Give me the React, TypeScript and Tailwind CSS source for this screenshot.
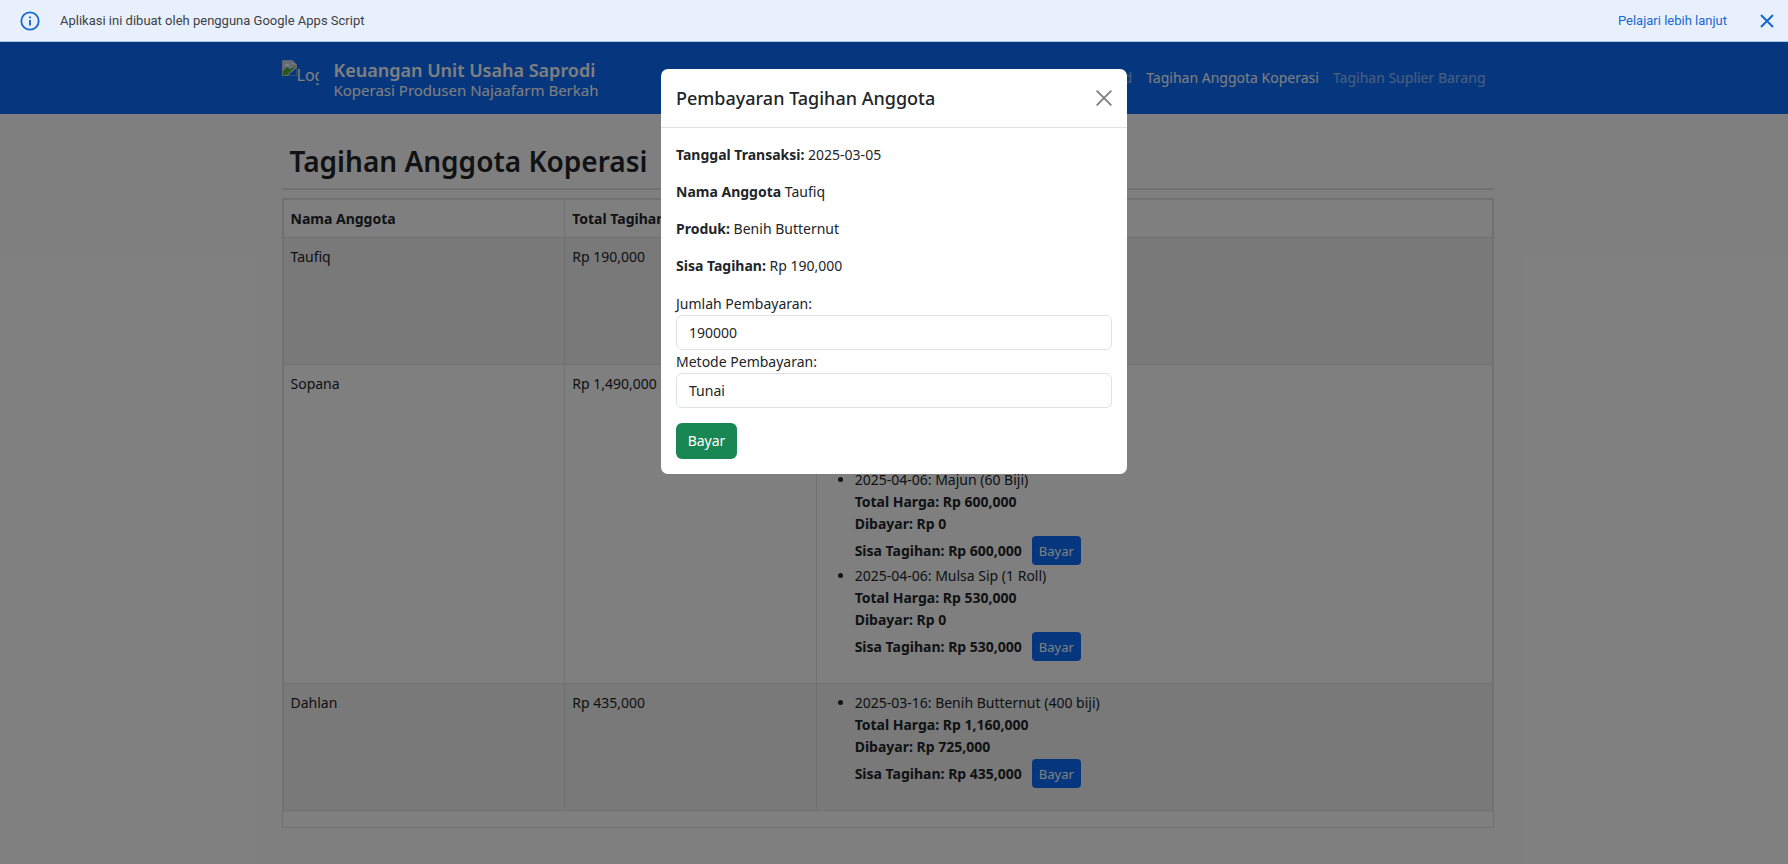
import React from 'react';

type Item = { text: string; total: string; paid: string; due: string };
type Member = { name: string; total: string; items: Item[] };

const members: Member[] = [
  {
    name: 'Taufiq',
    total: 'Rp 190,000',
    items: [{ text: '2025-03-05: Benih Butternut', total: 'Rp 190,000', paid: 'Rp 0', due: 'Rp 190,000' }],
  },
  {
    name: 'Sopana',
    total: 'Rp 1,490,000',
    items: [
      { text: '2025-03-16: Benih Butternut', total: 'Rp 360,000', paid: 'Rp 0', due: 'Rp 360,000' },
      { text: '2025-04-06: Majun (60 Biji)', total: 'Rp 600,000', paid: 'Rp 0', due: 'Rp 600,000' },
      { text: '2025-04-06: Mulsa Sip (1 Roll)', total: 'Rp 530,000', paid: 'Rp 0', due: 'Rp 530,000' },
    ],
  },
  {
    name: 'Dahlan',
    total: 'Rp 435,000',
    items: [
      { text: '2025-03-16: Benih Butternut (400 biji)', total: 'Rp 1,160,000', paid: 'Rp 725,000', due: 'Rp 435,000' },
    ],
  },
];

function Banner() {
  return (
    <div className="flex h-[42px] items-center border-b border-[#a8c7e8] bg-[#e8f0fe] pr-[13px] pl-5 font-[Roboto,sans-serif] text-[13px] text-[#3c4043]">
      <svg width="20" height="20" viewBox="0 0 20 20" fill="none" className="mr-5 shrink-0" aria-hidden="true">
        <circle cx="10" cy="10" r="8.7" stroke="#1967d2" strokeWidth="1.8" />
        <path d="M10 9v5.4M10 5.4v1.9" stroke="#1967d2" strokeWidth="1.9" />
      </svg>
      <span className="flex-1">Aplikasi ini dibuat oleh pengguna Google Apps Script</span>
      <a href="#" className="mr-8 text-[#1967d2]">Pelajari lebih lanjut</a>
      <button type="button" aria-label="Tutup" className="flex h-5 w-4 items-center justify-center">
        <svg width="14" height="14" viewBox="0 0 14 14" stroke="#1967d2" strokeWidth="2" aria-hidden="true">
          <path d="M1 1l12 12M13 1L1 13" />
        </svg>
      </button>
    </div>
  );
}

function Navbar() {
  return (
    <header className="bg-[#0d6efd] pr-[13px] text-white">
      <div className="mx-auto flex h-[72px] max-w-[1212px] items-center">
        <div className="mr-[15px] flex h-[37px] w-[37px] items-start overflow-hidden" role="img" aria-label="Logo">
          <svg width="15" height="16" viewBox="0 0 15 16" className="shrink-0" aria-hidden="true">
            <path d="M.5 .5h9.500l4.500 4.500v10.500h-14z" fill="#c3d9f8" stroke="#c8c8c8" />
            <path d="M1 15V11l4-4 3 2 6-3v0L5 15z" fill="#4fae3a" />
            <path d="M6 15.500L14.500 8v7.500z" fill="#0d6efd" />
            <path d="M10 .5V5h4.500z" fill="#fff" stroke="#c8c8c8" />
            <ellipse cx="5" cy="5" rx="2.500" ry="1.300" fill="#fff" />
          </svg>
          <span className="pt-1 text-[16px] leading-[22px]" aria-hidden="true">Logo</span>
        </div>
        <div className="flex flex-col pt-[3px]">
          <strong className="text-[18px] leading-5 font-semibold">Keuangan Unit Usaha Saprodi</strong>
          <span className="text-[15px] leading-5">Koperasi Produsen Najaafarm Berkah</span>
        </div>
        <nav className="ml-auto flex gap-[14px] pr-2 text-[14px] text-white/55">
          <a href="#">Dashboard</a>
          <a href="#" className="text-white">Tagihan Anggota Koperasi</a>
          <a href="#">Tagihan Suplier Barang</a>
        </nav>
      </div>
    </header>
  );
}

function Bill({ item }: { item: Item }) {
  return (
    <li>
      <div>{item.text}</div>
      <div className="font-bold">Total Harga: {item.total}</div>
      <div className="font-bold">Dibayar: {item.paid}</div>
      <div className="flex h-[30px] items-end gap-[10px]">
        <strong className="leading-[29px]">Sisa Tagihan: {item.due}</strong>
        <button type="button" className="h-[29px] w-[49px] rounded bg-[#0d6efd] text-[13px] text-white">Bayar</button>
      </div>
    </li>
  );
}

function BillTable() {
  return (
    <div className="border border-[#dee2e6] pb-4">
      <table className="w-full table-fixed border-collapse text-left align-top">
        <thead>
          <tr className="h-[38px]">
            <th className="w-[23.3%] border border-[#dee2e6] px-[7px]">Nama Anggota</th>
            <th className="w-[20.8%] border border-[#dee2e6] px-[7px]">Total Tagihan</th>
            <th className="border border-[#dee2e6] px-[7px]">Detail Tagihan</th>
          </tr>
        </thead>
        <tbody>
          {members.map((m) => (
            <tr key={m.name} className="align-top odd:bg-[#f2f2f2]">
              <td className="border border-[#dee2e6] px-[7px] py-2">{m.name}</td>
              <td className="border border-[#dee2e6] px-[7px] py-2">{m.total}</td>
              <td className="border border-[#dee2e6] px-[7px] py-2">
                <ul className="mb-[14px] list-disc pl-[31px]">
                  {m.items.map((it) => (
                    <Bill key={it.text} item={it} />
                  ))}
                </ul>
              </td>
            </tr>
          ))}
        </tbody>
      </table>
    </div>
  );
}

function PaymentModal() {
  const field = 'block h-[35px] w-full appearance-none rounded-md border border-[#dee2e6] bg-white px-[12px] text-[#212529] outline-none';
  return (
    <div role="dialog" aria-modal="true" aria-labelledby="judul" className="w-full max-w-[466px] rounded-[7px] bg-white">
      <div className="flex h-[59px] items-center justify-between border-b border-[#dee2e6] px-[15px]">
        <h2 id="judul" className="text-[18px] font-medium">Pembayaran Tagihan Anggota</h2>
        <button type="button" aria-label="Tutup" className="flex h-5 w-4 items-center justify-center">
          <svg width="16" height="16" viewBox="0 0 16 16" stroke="#808080" strokeWidth="1.9" strokeLinecap="round" aria-hidden="true">
            <path d="M1.200 1.200l13.600 13.600M14.800 1.200L1.200 14.800" />
          </svg>
        </button>
      </div>
      <form className="px-[15px] pt-4 pb-[15px]" onSubmit={(e) => e.preventDefault()}>
        <p className="mb-[15px]"><strong>Tanggal Transaksi:</strong> 2025-03-05</p>
        <p className="mb-[15px]"><strong>Nama Anggota</strong> Taufiq</p>
        <p className="mb-[15px]"><strong>Produk:</strong> Benih Butternut</p>
        <p className="mb-[15px]"><strong>Sisa Tagihan:</strong> Rp 190,000</p>
        <label htmlFor="jumlah" className="block leading-[23px]">Jumlah Pembayaran:</label>
        <input id="jumlah" className={field} defaultValue="190000" />
        <label htmlFor="metode" className="block leading-[23px]">Metode Pembayaran:</label>
        <select id="metode" className={field} defaultValue="Tunai">
          <option>Tunai</option>
          <option>Transfer</option>
        </select>
        <button type="submit" className="mt-[15px] h-9 w-[61px] rounded-md bg-[#198754] text-white">Bayar</button>
      </form>
    </div>
  );
}

export default function App() {
  return (
    <div className="flex min-h-screen flex-col bg-white">
      <Banner />
      <div className="relative flex-1 font-['Noto_Sans','Open_Sans',sans-serif] text-[14px] leading-[22px] text-[#212529]">
        <Navbar />
        <main className="pr-[13px]">
          <div className="mx-auto max-w-[1212px] pt-7">
            <h1 className="px-2 pb-2 text-[28px] leading-[38px] font-semibold">Tagihan Anggota Koperasi</h1>
            <hr className="mb-2 border-t-2 border-[#dee2e6]" />
            <BillTable />
          </div>
        </main>
        <div className="absolute inset-0 flex items-start justify-center bg-black/50 pt-[27px]">
          <PaymentModal />
        </div>
      </div>
    </div>
  );
}
